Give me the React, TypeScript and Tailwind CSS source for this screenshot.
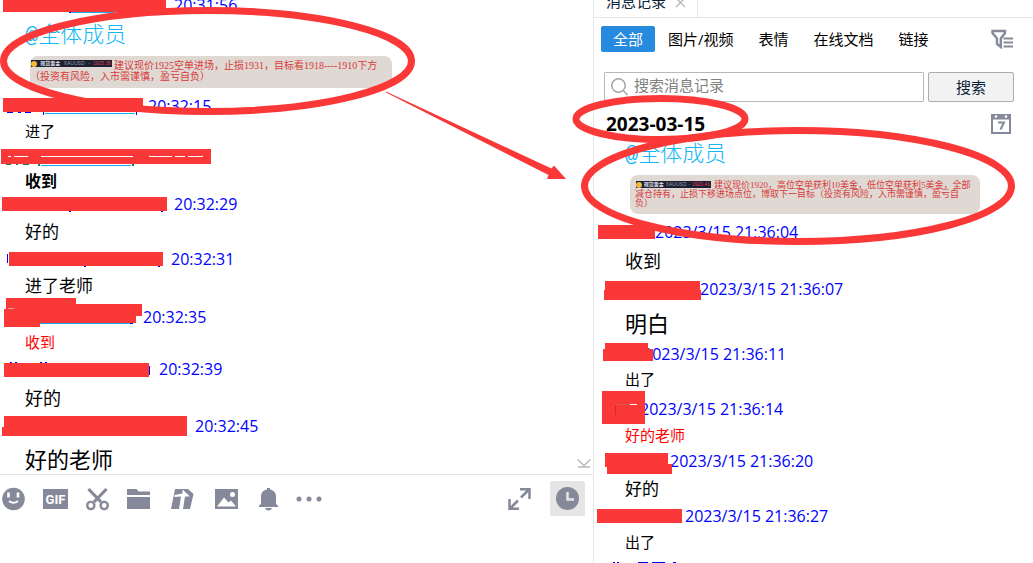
import type { ReactNode } from "react";

type Rect = [x: number, y: number, w: number, h: number];
type Stroke = [x: number, y: number, w: number, h: number, color: string];

interface Entry {
  time: string;
  nameWidth: number;
  bars: Rect[];
  traces?: Stroke[];
  text?: string;
  textClass?: string;
  body?: ReactNode;
}

const RED = "#fb3838";
const BLUE = "#0000ff";
const CYAN = "#12b0ee";
const GREEN = "#0a8a50";
const ICON = "#858999";

const CHAT: Entry[] = [
  {
    time: "20:31:56",
    nameWidth: 174,
    bars: [[3, 5, 163, 12]],
    traces: [[71, 17, 44, 1, CYAN], [69, 17, 2, 1, BLUE]],
    body: (
      <Quote
        cardClass="w-[362px] h-8 pt-1 text-[10px] leading-[11px]"
        badgeClass="w-[81px] ml-px mr-[2px]"
        price="1925.36"
        lines={["建议现价1925空单进场，止损1931，目标看1918----1910下方", "（投资有风险，入市需谨慎，盈亏自负）"]}
      />
    ),
  },
  {
    time: "20:32:15",
    nameWidth: 148,
    bars: [[3, 2, 140, 14]],
    traces: [
      [45, 17, 90, 1, CYAN],
      [43, 16, 1, 3, BLUE],
      [136, 16, 1, 3, BLUE],
      [7, 16, 6, 1, BLUE],
      [18, 16, 3, 1, BLUE],
      [25, 16, 6, 1, BLUE],
    ],
    text: "进了",
    textClass: "h-[31px] text-[15px]",
  },
  {
    time: "",
    nameWidth: 212,
    bars: [[1, 2, 210, 15]],
    traces: [
      [8, 9, 3, 1, "#ffffff"],
      [14, 9, 14, 1, "#ffffff"],
      [41, 9, 92, 1, "#ffffff"],
      [149, 9, 23, 1, "#ffffff"],
      [175, 9, 10, 1, "#ffffff"],
      [188, 9, 15, 1, "#ffffff"],
      [41, 18, 90, 1, CYAN],
      [38, 17, 2, 2, GREEN],
      [132, 17, 2, 2, GREEN],
      [6, 17, 5, 1, GREEN],
      [16, 17, 2, 1, GREEN],
      [23, 17, 6, 1, GREEN],
    ],
    text: "收到",
    textClass: "h-[27px] text-base font-bold",
  },
  {
    time: "20:32:29",
    nameWidth: 174,
    bars: [[2, 3, 165, 14]],
    traces: [[69, 17, 2, 1, BLUE], [161, 17, 2, 1, BLUE]],
    text: "好的",
    textClass: "h-[35px] text-[17px]",
  },
  {
    time: "20:32:31",
    nameWidth: 171,
    bars: [[9, 3, 154, 14]],
    traces: [[7, 5, 1, 9, BLUE], [84, 17, 2, 1, BLUE], [158, 17, 2, 1, BLUE]],
    text: "进了老师",
    textClass: "h-[38px] pb-1 text-[17px]",
  },
  {
    time: "20:32:35",
    nameWidth: 143,
    bars: [[6, -9, 70, 12], [30, -3, 112, 12], [4, 2, 132, 14], [4, 10, 36, 10]],
    traces: [[40, 16, 90, 1, CYAN], [130, 16, 3, 1, BLUE], [8, 1, 6, 1, "#d59a96"]],
    text: "收到",
    textClass: "h-8 pb-px text-[15px] text-[#ff0000]",
  },
  {
    time: "20:32:39",
    nameWidth: 159,
    bars: [[4, 4, 145, 14]],
    traces: [[10, 3, 2, 1, BLUE], [15, 3, 2, 1, BLUE], [40, 3, 2, 1, BLUE], [45, 3, 2, 1, BLUE], [149, 7, 1, 9, BLUE]],
    text: "好的",
    textClass: "h-[37px] text-lg",
  },
  {
    time: "20:32:45",
    nameWidth: 195,
    bars: [[4, 0, 183, 20], [2, 11, 185, 9]],
    text: "好的老师",
    textClass: "h-[38px] pt-2 text-[22px]",
  },
];

const HISTORY: Entry[] = [
  {
    time: "2023/3/15 21:36:04",
    nameWidth: 61,
    bars: [[4, 3, 57, 14]],
    text: "收到",
    textClass: "h-[37px] text-lg",
  },
  {
    time: "2023/3/15 21:36:07",
    nameWidth: 106,
    bars: [[11, 2, 95, 12], [10, 11, 97, 10]],
    text: "明白",
    textClass: "h-[45px] pt-1 text-[22px]",
  },
  {
    time: "2023/3/15 21:36:11",
    nameWidth: 49,
    bars: [[11, -1, 43, 8], [9, 5, 50, 12]],
    text: "出了",
    textClass: "h-[35px] pb-1 text-[15px]",
  },
  {
    time: "2023/3/15 21:36:14",
    nameWidth: 46,
    bars: [[8, -8, 43, 33]],
    traces: [[21, 5, 14, 1, "#d9564e"], [36, 5, 7, 1, "#ffffff"], [21, 6, 1, 10, "#d92a1e"]],
    text: "好的老师",
    textClass: "h-8 text-[15px] text-[#ff0000]",
  },
  {
    time: "2023/3/15 21:36:20",
    nameWidth: 76,
    bars: [[11, 2, 63, 14], [13, 13, 65, 10]],
    text: "好的",
    textClass: "h-[35px] text-[17px]",
  },
  {
    time: "2023/3/15 21:36:27",
    nameWidth: 91,
    bars: [[3, 3, 85, 14]],
    text: "出了",
    textClass: "h-8 text-[15px]",
  },
  {
    time: "",
    nameWidth: 91,
    bars: [],
    traces: [[19, 4, 2, 1, BLUE], [23, 4, 2, 1, BLUE], [44, 4, 10, 1, BLUE], [58, 4, 13, 1, BLUE], [79, 4, 3, 1, BLUE]],
  },
];

const FILTERS = ["全部", "图片/视频", "表情", "在线文档", "链接"];

interface QuoteProps {
  cardClass: string;
  badgeClass: string;
  price: string;
  lines: string[];
}

function Quote({ cardClass, badgeClass, price, lines }: QuoteProps) {
  return (
    <>
      <p className="h-[41px] pl-[25px] text-[22px] leading-[43px] font-light text-[#12b7f5] font-['Liberation_Mono','Noto_Sans_CJK_SC',sans-serif]">
        @全体成员
      </p>
      <div
        className={`ml-[30px] mb-2 shrink-0 overflow-hidden whitespace-nowrap rounded-lg bg-[#e0d8d3] text-[#d83a3a] font-['Liberation_Serif','Noto_Sans_CJK_SC',serif] ${cardClass}`}
      >
        <p className="flex items-start">
          <span
            className={`flex h-[7px] shrink-0 items-center justify-between bg-[#1b2033] pr-px font-['Liberation_Sans','Noto_Sans_CJK_SC',sans-serif] text-[5px] leading-[7px] text-[#9a9ca8] ${badgeClass}`}
          >
            <span className="size-[6px] rounded-full bg-[#f3b93c]" />
            <b className="text-[#e8e8ec]">现货黄金</b>
            <span>XAUUSD</span>
            <span>-</span>
            <span className="text-[#e23b4c]">{price}</span>
          </span>
          {lines[0]}
        </p>
        {lines.slice(1).map((line) => (
          <p key={line}>{line}</p>
        ))}
      </div>
    </>
  );
}

function Message({ entry, indent }: { entry: Entry; indent: string }) {
  return (
    <li className="shrink-0">
      <div className="flex h-5 items-center whitespace-nowrap text-base leading-5 text-[#0000ff]">
        <svg className="relative shrink-0 overflow-visible" width={entry.nameWidth} height="20" aria-hidden="true">
          {entry.bars.map(([x, y, w, h], i) => (
            <rect key={i} x={x} y={y} width={w} height={h} fill={RED} />
          ))}
          {entry.traces?.map(([x, y, w, h, color], i) => (
            <rect key={i} x={x} y={y} width={w} height={h} fill={color} />
          ))}
        </svg>
        <time>{entry.time}</time>
      </div>
      {entry.body}
      {entry.text && <p className={`flex items-center ${indent} ${entry.textClass}`}>{entry.text}</p>}
    </li>
  );
}

function Toolbar() {
  return (
    <div className="flex h-[89px] shrink-0 items-start border-t border-[#e5e5e5] pl-[2px] pr-2">
      <div className="flex h-[47px] items-center gap-[18px]">
        <button aria-label="表情" className="w-[23px]">
          <svg width="23" height="24" viewBox="0 0 23 24">
            <circle cx="11.5" cy="12" r="11.3" fill={ICON} />
            <path d="M6.5 5.500v5M16 5.500v5" stroke="#fff" strokeWidth="2.600" />
            <path d="M7 14q4.500 3.600 9 0" stroke="#fff" strokeWidth="2" fill="none" />
          </svg>
        </button>
        <button aria-label="GIF" className="w-[25px]">
          <svg width="25" height="24" viewBox="0 0 25 24">
            <path d="M0 2h25v20H0z" fill={ICON} />
            <text
              x="12.5"
              y="17"
              textAnchor="middle"
              fill="#fff"
              fontSize="13"
              fontWeight="700"
              fontFamily="Roboto, Liberation Sans, sans-serif"
            >
              GIF
            </text>
          </svg>
        </button>
        <button aria-label="截图" className="w-[23px]">
          <svg width="23" height="24" viewBox="0 0 23 24" fill="none" stroke={ICON}>
            <path d="M2.500 2l12.500 13M20.500 2L8 15" strokeWidth="3.200" />
            <circle cx="4.800" cy="18.500" r="3.600" strokeWidth="2.400" />
            <circle cx="18.200" cy="18.500" r="3.600" strokeWidth="2.400" />
          </svg>
        </button>
        <button aria-label="文件" className="w-[26px]">
          <svg width="23" height="24" viewBox="0 0 23 24" fill={ICON}>
            <path d="M0 2h9.500l2 2.500H23V8H0zM0 10h23v12H0z" />
          </svg>
        </button>
        <button aria-label="应用" className="w-[26px]">
          <svg width="23" height="24" viewBox="0 0 23 24">
            <path d="M4 2h13l5.500 5L19 22H0z" fill={ICON} />
            <path d="M11.500 2.500L19 9.500h-5L12 22H8L10 9.500 3.500 10V8L11.500 6.500z" fill="#fff" />
          </svg>
        </button>
        <button aria-label="图片" className="w-[26px]">
          <svg width="23" height="24" viewBox="0 0 23 24">
            <path d="M0 2h23v20H0z" fill={ICON} />
            <path d="M2 19.500L9 10.500l4.500 5 2.500-2 5 6z" fill="#fff" />
            <circle cx="17.500" cy="7.500" r="2.500" fill="#fff" />
          </svg>
        </button>
        <button aria-label="提醒" className="w-[19px]">
          <svg width="19" height="24" viewBox="0 0 19 24" fill={ICON}>
            <path d="M8 1h3v1.500c4 .7 6 3.500 6 7V17l2 1.500V20H0v-1.500L2 17V9.500c0-3.500 2-6.300 6-7zM6 21h7q-1 2.500-3.500 2.500T6 21z" />
          </svg>
        </button>
        <button aria-label="更多" className="w-[26px]">
          <svg width="26" height="24" viewBox="0 0 26 24" fill={ICON}>
            <circle cx="3" cy="12" r="2.500" />
            <circle cx="13" cy="12" r="2.500" />
            <circle cx="23" cy="12" r="2.500" />
          </svg>
        </button>
      </div>
      <div className="ml-auto flex h-[47px] items-center gap-[19px]">
        <button aria-label="展开">
          <svg width="23" height="24" viewBox="0 0 23 24" fill="none" stroke={ICON} strokeWidth="2.500">
            <path d="M12 2.200h9.500V12M20.500 3L13 10.500M1.500 12v9.800H11M2.500 21L10 13.500" />
          </svg>
        </button>
        <button aria-label="消息记录" className="flex size-[35px] items-center justify-center rounded-xs bg-[#e5e5e5]">
          <svg width="23" height="23" viewBox="0 0 23 23">
            <circle cx="11.500" cy="11.500" r="11.500" fill={ICON} />
            <path d="M11.500 5v7.500H18" stroke="#e5e5e5" strokeWidth="2.500" fill="none" />
          </svg>
        </button>
      </div>
    </div>
  );
}

function ChatPane() {
  return (
    <section className="flex min-w-0 flex-[593_1_0%] flex-col">
      <div className="relative flex min-h-0 flex-1 flex-col">
        <ul className="flex min-h-0 flex-1 flex-col justify-end overflow-hidden">
          {CHAT.map((entry, i) => (
            <Message key={i} entry={entry} indent="pl-[25px]" />
          ))}
        </ul>
        <button aria-label="收起" className="absolute bottom-[6px] right-[2px]">
          <svg width="14" height="10" viewBox="0 0 14 10" fill="none" stroke="#b9b9b9" strokeWidth="1.500">
            <path d="M.5 1.500L7 7.500l6.500-6M1 9h12" />
          </svg>
        </button>
      </div>
      <Toolbar />
    </section>
  );
}

function HistoryPane() {
  return (
    <section className="flex min-w-0 flex-[439_1_0%] flex-col overflow-hidden border-l border-[#e5e5e5]">
      <div className="flex h-[18px] shrink-0 items-end overflow-hidden border-b border-[#e5e5e5]">
        <div className="flex w-[104px] items-center gap-[9px] border-r border-[#e5e5e5] pb-[6px] pl-3 text-[15px] leading-5 text-[#0b2338]">
          <span>消息记录</span>
          <button aria-label="关闭">
            <svg width="11" height="20" viewBox="0 0 11 20" stroke="#b4b4b4" strokeWidth="1.300">
              <path d="M1 7l9 9M10 7l-9 9" />
            </svg>
          </button>
        </div>
      </div>

      <div className="flex items-center justify-between pl-[7px] pr-5 pt-2">
        <nav className="flex gap-px text-[15px] leading-[26px]">
          {FILTERS.map((label, i) => (
            <button
              key={label}
              className={i === 0 ? "rounded-xs bg-[#268bdf] px-3 text-white" : "px-3 text-black"}
            >
              {label}
            </button>
          ))}
        </nav>
        <button aria-label="筛选">
          <svg width="22" height="20" viewBox="0 0 22 20">
            <path d="M1.500 2h12.500v2L9.800 9.500V18L6 15V9.500L1.500 4z" fill="none" stroke={ICON} strokeWidth="2.400" />
            <path d="M12.500 9.500H22M12.500 13.500H22M12.500 17.500H22" stroke={ICON} strokeWidth="2" />
          </svg>
        </button>
      </div>

      <form className="mt-5 flex gap-1 pl-[10px] pr-[19px]" onSubmit={(e) => e.preventDefault()}>
        <label className="flex h-[30px] min-w-0 flex-1 items-center gap-[6px] rounded-[1px] border border-[#b8b8b8] pl-[6px]">
          <svg width="17" height="18" viewBox="0 0 17 18" fill="none" stroke="#a6a6a6" strokeWidth="1.500" className="shrink-0">
            <circle cx="7.500" cy="7.500" r="6.700" />
            <path d="M12.300 12.500l4.200 4.500" />
          </svg>
          <input
            type="text"
            aria-label="搜索消息记录"
            placeholder="搜索消息记录"
            className="h-7 min-w-0 flex-1 pb-1 text-[15px] outline-none placeholder:text-[#808080]"
          />
        </label>
        <button type="submit" className="h-[30px] w-[86px] rounded-xs border border-[#adadad] bg-[#f2f2f2] text-[15px] leading-7 text-[#0b2338]">
          搜索
        </button>
      </form>

      <div className="flex h-8 shrink-0 items-center justify-between pl-3 pr-[22px] pt-3">
        <h2 className="text-[19px] leading-5 font-bold text-black">2023-03-15</h2>
        <button aria-label="选择日期">
          <svg width="20" height="20" viewBox="0 0 20 20">
            <path d="M0 0h20v20H0z" fill={ICON} />
            <path d="M2 5.500h16V18H2z" fill="#fff" />
            <circle cx="5" cy="2.600" r="1.300" fill="#fff" />
            <circle cx="15" cy="2.600" r="1.300" fill="#fff" />
            <path d="M7 8.500h6L9.500 15.500" fill="none" stroke={ICON} strokeWidth="2" />
          </svg>
        </button>
      </div>

      <div className="pl-[6px]">
        <Quote
          cardClass="w-[350px] h-[39px] pt-[6px] pl-[5px] text-[9px] leading-[9px]"
          badgeClass="w-[75px] ml-px mr-[3px]"
          price="1920.41"
          lines={[
            "建议现价1920，高位空单获利10美金，低位空单获利5美金，全部",
            "减仓持有，止损下移进场点位，博取下一目标（投资有风险，入市需谨慎，盈亏自",
            "负）",
          ]}
        />
      </div>
      <ul>
        {HISTORY.map((entry, i) => (
          <Message key={i} entry={entry} indent="pl-[31px]" />
        ))}
      </ul>
    </section>
  );
}

function Markup() {
  return (
    <svg className="pointer-events-none absolute inset-0 size-full" fill="none" stroke={RED} strokeWidth="7" aria-hidden="true">
      <ellipse cx="207.500" cy="61" rx="204" ry="50.500" />
      <ellipse cx="660.500" cy="119" rx="84.500" ry="20.500" />
      <ellipse cx="798" cy="186" rx="213.500" ry="55.500" />
      <path d="M386 91.500L551.500 168.500 554 165.500 566 179H547l1.500-4L386 92.500z" fill={RED} stroke="none" />
    </svg>
  );
}

export default function App() {
  return (
    <main className="relative flex h-screen overflow-hidden bg-white text-black font-['Open_Sans','Noto_Sans_CJK_SC',sans-serif]">
      <ChatPane />
      <HistoryPane />
      <Markup />
    </main>
  );
}
